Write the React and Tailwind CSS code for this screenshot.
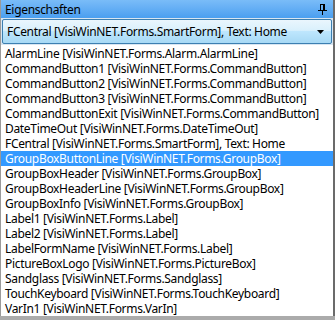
const items = [
  'AlarmLine [VisiWinNET.Forms.Alarm.AlarmLine]',
  'CommandButton1 [VisiWinNET.Forms.CommandButton]',
  'CommandButton2 [VisiWinNET.Forms.CommandButton]',
  'CommandButton3 [VisiWinNET.Forms.CommandButton]',
  'CommandButtonExit [VisiWinNET.Forms.CommandButton]',
  'DateTimeOut [VisiWinNET.Forms.DateTimeOut]',
  'FCentral [VisiWinNET.Forms.SmartForm], Text: Home',
  'GroupBoxButtonLine [VisiWinNET.Forms.GroupBox]',
  'GroupBoxHeader [VisiWinNET.Forms.GroupBox]',
  'GroupBoxHeaderLine [VisiWinNET.Forms.GroupBox]',
  'GroupBoxInfo [VisiWinNET.Forms.GroupBox]',
  'Label1 [VisiWinNET.Forms.Label]',
  'Label2 [VisiWinNET.Forms.Label]',
  'LabelFormName [VisiWinNET.Forms.Label]',
  'PictureBoxLogo [VisiWinNET.Forms.PictureBox]',
  'Sandglass [VisiWinNET.Forms.Sandglass]',
  'TouchKeyboard [VisiWinNET.Forms.TouchKeyboard]',
  'VarIn1 [VisiWinNET.Forms.VarIn]',
]

const selected = 'GroupBoxButtonLine [VisiWinNET.Forms.GroupBox]'

function PinIcon() {
  return (
    <svg width="9" height="11" viewBox="0 0 9 11" className="block">
      <rect x="2" y="0" width="5" height="1" fill="#000" />
      <rect x="2" y="1" width="1" height="5" fill="#000" />
      <rect x="5" y="1" width="2" height="5" fill="#000" />
      <rect x="0" y="6" width="9" height="1" fill="#000" />
      <rect x="4" y="7" width="1" height="4" fill="#000" />
    </svg>
  )
}

export default function App() {
  return (
    <div
      className="h-[320px] w-[335px] overflow-hidden bg-[#ababab] text-[12px] leading-[15px] tracking-[-0.32px] text-black"
      style={{ fontFamily: '"Noto Sans", "Segoe UI", sans-serif' }}
    >
      <div className="flex h-[316px] flex-col border-l border-r-2 border-l-[#9a9a9a] border-r-[#6b6b6b] bg-white">
        <div className="flex h-[20px] items-center justify-between bg-gradient-to-b from-[#7abcf8] to-[#4a9ff0] pl-[4px] pr-[6px]">
          <span>Eigenschaften</span>
          <PinIcon />
        </div>
        <div className="bg-[#d8e6f2] px-[1px] py-[1px]">
          <div className="flex h-[25px] items-center justify-between rounded-[2px] border border-[#3c7fb1] bg-[linear-gradient(to_bottom,#eaf6fd_0%,#d9f0fc_45%,#bee6fd_50%,#a7d9f5_100%)] pl-[4px] pr-[7px]">
            <span className="whitespace-nowrap">FCentral [VisiWinNET.Forms.SmartForm], Text: Home</span>
            <svg width="7" height="4" viewBox="0 0 7 4" className="block">
              <path d="M0 0H7L3.5 4Z" fill="#000" />
            </svg>
          </div>
        </div>
        <ul className="flex-1 pt-[1px]">
          {items.map((t) => (
            <li
              key={t}
              className={
                t === selected
                  ? 'h-[15px] whitespace-nowrap bg-[#3399ff] pl-[4px] text-white'
                  : 'h-[15px] whitespace-nowrap pl-[4px]'
              }
            >
              {t}
            </li>
          ))}
        </ul>
      </div>
    </div>
  )
}
